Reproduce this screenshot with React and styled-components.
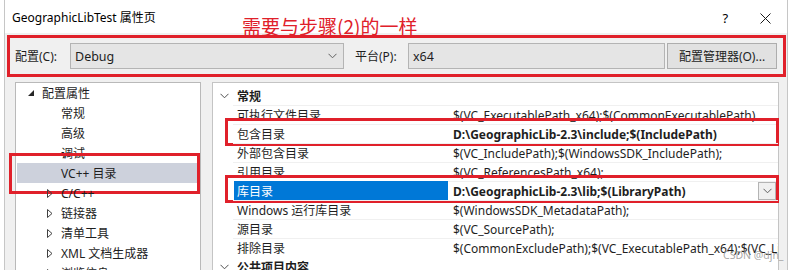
import React from "react";
import styled, { createGlobalStyle, css } from "styled-components";

const RED = "#e0202a";

const GlobalStyle = createGlobalStyle`
  html, body { margin: 0; padding: 0; background: #fff; }
  * { box-sizing: border-box; }
`;

const Root = styled.div`
  position: relative;
  width: 792px;
  height: 270px;
  overflow: hidden;
  background: #fff;
  font-family: "Noto Sans", "Noto Sans CJK SC", sans-serif;
  font-size: 12px;
  color: #1e1e1e;
`;

const Window = styled.div`
  margin-left: 4px;
  width: 784px;
  height: 100%;
  display: flex;
  flex-direction: column;
  background: #f0f0f0;
  border-left: 1px solid #c6c6c6;
  border-right: 1px solid #c6c6c6;
`;

const TitleBar = styled.div`
  height: 33px;
  flex: none;
  display: flex;
  align-items: flex-start;
  padding: 10px 0 0 7px;
  background: #fff;
`;

const Title = styled.div`
  width: 230px;
  line-height: 16px;
  color: #000;
`;

const Note = styled.div`
  margin-top: 5px;
  font-size: 19px;
  line-height: 22px;
  color: ${RED};
  font-family: "Noto Sans CJK SC", sans-serif;
`;

const TitleButton = styled.div`
  width: 16px;
  height: 16px;
  display: flex;
  align-items: center;
  justify-content: center;
  color: #000;
  font-size: 13px;
  margin-left: ${(p) => p.$gap}px;
`;

const Toolbar = styled.div`
  margin: 2px 0 0 2px;
  width: 779px;
  height: 42px;
  flex: none;
  display: flex;
  align-items: center;
  padding-left: 5px;
  border: 3px solid ${RED};
`;

const Label = styled.span`
  width: ${(p) => p.$w}px;
  margin-left: ${(p) => p.$ml || 0}px;
  white-space: nowrap;
`;

const Combo = styled.div`
  width: ${(p) => p.$w}px;
  height: 26px;
  display: flex;
  align-items: center;
  justify-content: space-between;
  padding: 0 6px 0 4px;
  background: #e5e5e5;
  border: 1px solid #b4b4b4;
  font-size: 12.5px;
`;

const Button = styled.div`
  width: 110px;
  height: 26px;
  margin-left: 2px;
  display: flex;
  align-items: center;
  justify-content: center;
  background: #e1e1e1;
  border: 1px solid #adadad;
`;

const Panels = styled.div`
  flex: 1;
  display: flex;
  gap: 11px;
  margin-top: 5px;
  padding-left: 10px;
`;

const Tree = styled.div`
  width: 186px;
  height: 200px;
  background: #fff;
  border: 1px solid #b9b9b9;
`;

const TreeRow = styled.div`
  position: relative;
  height: 20px;
  display: flex;
  align-items: center;
  margin: 0 3px 0 1px;
  padding-left: ${(p) => (p.$level ? 30 : 11)}px;
  ${(p) =>
    p.$selected &&
    css`
      background: #cdd1dc;
      &::after {
        content: "";
        position: absolute;
        top: -10px;
        bottom: -11px;
        left: -8px;
        right: -3px;
        border: 3px solid ${RED};
      }
    `}
`;

const Toggle = styled.span`
  width: 14px;
  display: flex;
  align-items: center;
`;

const Grid = styled.div`
  width: 567px;
  height: 200px;
  padding-top: 3px;
  background: #fff;
  border: 1px solid #c4c4c4;
`;

const Row = styled.div`
  position: relative;
  height: 19px;
  display: grid;
  grid-template-columns: 20px 215px 1fr;
  align-items: stretch;
  ${(p) =>
    p.$marked &&
    css`
      &::after {
        content: "";
        position: absolute;
        top: -6px;
        bottom: -3px;
        left: 12px;
        right: -1px;
        border: 3px solid ${RED};
      }
    `}
`;

const Gutter = styled.div`
  display: flex;
  align-items: center;
  justify-content: center;
  padding-left: 2px;
`;

const Category = styled.div`
  grid-column: 2 / 4;
  display: flex;
  align-items: center;
  padding-left: 4px;
  font-weight: bold;
  color: #1e1e1e;
`;

const Name = styled.div`
  display: flex;
  align-items: center;
  padding-left: 4px;
  white-space: nowrap;
  border-top: 1px solid #f0f0f0;
  ${(p) =>
    p.$selected &&
    css`
      margin-left: 1px;
      padding-left: 3px;
      background: #0078d7;
      color: #fff;
      border-top-color: #0078d7;
    `}
`;

const Value = styled.div`
  position: relative;
  display: flex;
  align-items: center;
  padding-left: 5px;
  overflow: hidden;
  white-space: nowrap;
  border-top: 1px solid #f0f0f0;
  font-weight: ${(p) => (p.$bold ? "bold" : "normal")};
`;

const Drop = styled.div`
  position: absolute;
  right: 2px;
  top: 0;
  width: 18px;
  height: 18px;
  display: flex;
  align-items: center;
  justify-content: center;
  background: #f0f0f0;
  border: 1px solid #b4b4b4;
`;

const Watermark = styled.div`
  position: absolute;
  left: 723px;
  top: 249px;
  font-size: 10.5px;
  line-height: 13px;
  color: rgba(150, 150, 150, 0.85);
  font-family: "Noto Sans", sans-serif;
`;

const Chevron = ({ color = "#606060" }) => (
  <svg width="9" height="6" viewBox="0 0 9 6">
    <polyline points="0.5,0.8 4.5,4.8 8.5,0.8" fill="none" stroke={color} strokeWidth="1" />
  </svg>
);

const Expanded = () => (
  <svg width="6" height="6" viewBox="0 0 6 6">
    <polygon points="6,0 6,6 0,6" fill="#262626" />
  </svg>
);

const Collapsed = () => (
  <svg width="6" height="9" viewBox="0 0 6 9">
    <polygon points="0.5,0.5 5,4.5 0.5,8.5" fill="none" stroke="#404040" strokeWidth="1" />
  </svg>
);

const CloseIcon = () => (
  <svg width="11" height="11" viewBox="0 0 11 11">
    <path d="M0.5 0.5 L10.5 10.5 M10.5 0.5 L0.5 10.5" stroke="#1a1a1a" strokeWidth="1" />
  </svg>
);

const treeItems = [
  { label: "配置属性", level: 0, toggle: "open" },
  { label: "常规", level: 1 },
  { label: "高级", level: 1 },
  { label: "调试", level: 1 },
  { label: "VC++ 目录", level: 1, selected: true },
  { label: "C/C++", level: 1, toggle: "closed" },
  { label: "链接器", level: 1, toggle: "closed" },
  { label: "清单工具", level: 1, toggle: "closed" },
  { label: "XML 文档生成器", level: 1, toggle: "closed" },
  { label: "浏览信息", level: 1, toggle: "closed" },
];

const props = [
  { category: "常规" },
  { name: "可执行文件目录", value: "$(VC_ExecutablePath_x64);$(CommonExecutablePath)" },
  { name: "包含目录", value: "D:\\GeographicLib-2.3\\include;$(IncludePath)", bold: true, marked: true },
  { name: "外部包含目录", value: "$(VC_IncludePath);$(WindowsSDK_IncludePath);" },
  { name: "引用目录", value: "$(VC_ReferencesPath_x64);" },
  { name: "库目录", value: "D:\\GeographicLib-2.3\\lib;$(LibraryPath)", bold: true, marked: true, selected: true },
  { name: "Windows 运行库目录", value: "$(WindowsSDK_MetadataPath);" },
  { name: "源目录", value: "$(VC_SourcePath);" },
  { name: "排除目录", value: "$(CommonExcludePath);$(VC_ExecutablePath_x64);$(VC_LibraryPath_x64);" },
  { category: "公共项目内容" },
];

export default function App() {
  return (
    <Root>
      <GlobalStyle />
      <Window>
        <TitleBar>
          <Title>GeographicLibTest 属性页</Title>
          <Note>需要与步骤(2)的一样</Note>
          <TitleButton $gap={300}>?</TitleButton>
          <TitleButton $gap={24}>
            <CloseIcon />
          </TitleButton>
        </TitleBar>

        <Toolbar>
          <Label $w={55}>配置(C):</Label>
          <Combo $w={274}>
            <span>Debug</span>
            <Chevron />
          </Combo>
          <Label $w={53} $ml={11}>平台(P):</Label>
          <Combo $w={257}>
            <span>x64</span>
          </Combo>
          <Button>配置管理器(O)...</Button>
        </Toolbar>

        <Panels>
          <Tree>
            {treeItems.map((item) => (
              <TreeRow key={item.label} $level={item.level} $selected={item.selected}>
                <Toggle>
                  {item.toggle === "open" && <Expanded />}
                  {item.toggle === "closed" && <Collapsed />}
                </Toggle>
                {item.label}
              </TreeRow>
            ))}
          </Tree>

          <Grid>
            {props.map((p) =>
              p.category ? (
                <Row key={p.category}>
                  <Gutter>
                    <Chevron color="#505050" />
                  </Gutter>
                  <Category>{p.category}</Category>
                </Row>
              ) : (
                <Row key={p.name} $marked={p.marked}>
                  <Gutter />
                  <Name $selected={p.selected}>{p.name}</Name>
                  <Value $bold={p.bold}>
                    {p.value}
                    {p.selected && (
                      <Drop>
                        <Chevron />
                      </Drop>
                    )}
                  </Value>
                </Row>
              )
            )}
          </Grid>
        </Panels>
      </Window>
      <Watermark>CSDN @djn_</Watermark>
    </Root>
  );
}
